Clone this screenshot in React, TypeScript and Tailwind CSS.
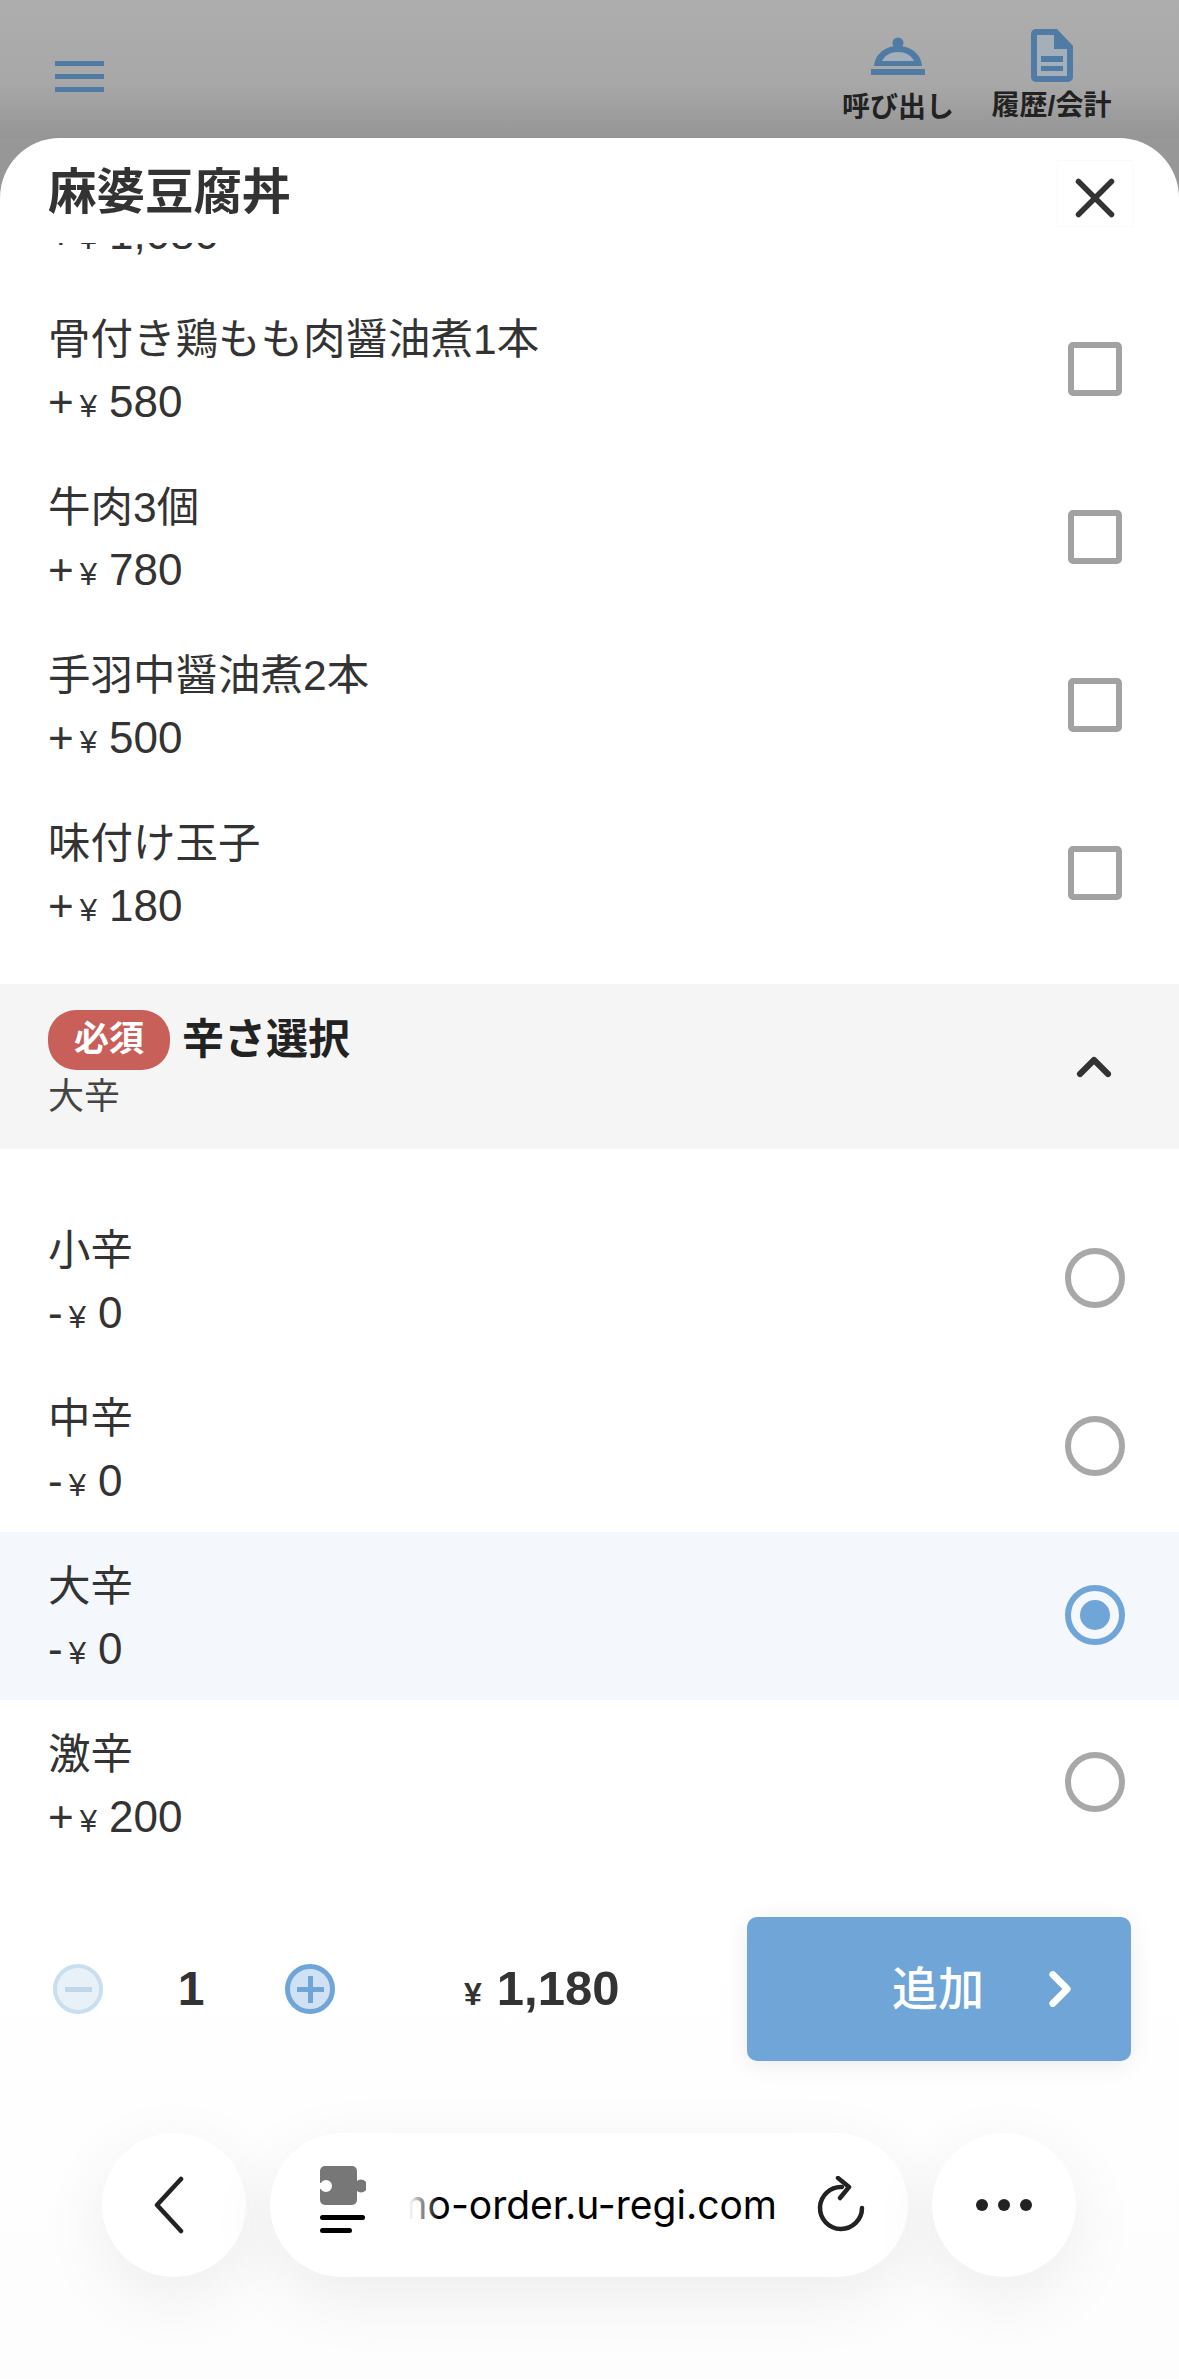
import { X, ChevronUp, ChevronRight } from "lucide-react";

interface Option {
  name: string;
  price: string;
  selected?: boolean;
}

const toppings: Option[] = [
  { name: "骨付き鶏もも肉醤油煮1本", price: "+¥ 580" },
  { name: "牛肉3個", price: "+¥ 780" },
  { name: "手羽中醤油煮2本", price: "+¥ 500" },
  { name: "味付け玉子", price: "+¥ 180" },
];

const spiciness: Option[] = [
  { name: "小辛", price: "-¥ 0" },
  { name: "中辛", price: "-¥ 0" },
  { name: "大辛", price: "-¥ 0", selected: true },
  { name: "激辛", price: "+¥ 200" },
];

function OptionText({ option }: { option: Option }) {
  const [sign, amount] = [option.price.slice(0, 2), option.price.slice(3)];
  return (
    <div className="mt-[9px] flex flex-col text-[#333] text-[42.5px] leading-[62px]">
      <span>{option.name}</span>
      <span className="text-[44px]">
        {sign[0]}
        <span className="ml-[6px] mr-[12px] text-[31px]">{sign[1]}</span>
        {amount}
      </span>
    </div>
  );
}

function CheckRow({ option }: { option: Option }) {
  return (
    <div className="h-[168px] pl-[48px] pr-[57px] flex items-center justify-between">
      <OptionText option={option} />
      <div className="w-[54px] h-[54px] border-[6px] border-[#a2a2a2] rounded-[5px]" />
    </div>
  );
}

function RadioRow({ option }: { option: Option }) {
  return (
    <div
      className={`h-[168px] pl-[48px] pr-[54px] flex items-center justify-between ${
        option.selected ? "bg-[#f4f7fb]" : ""
      }`}
    >
      <OptionText option={option} />
      {option.selected ? (
        <div className="-mt-[3px] w-[60px] h-[60px] rounded-full border-[6px] border-[#6fa5d7] flex items-center justify-center">
          <div className="w-[30px] h-[30px] rounded-full bg-[#6fa5d7]" />
        </div>
      ) : (
        <div className="-mt-[5px] w-[60px] h-[60px] rounded-full border-[6px] border-[#a8a8a8]" />
      )}
    </div>
  );
}

function BellIcon() {
  return (
    <svg width="54" height="38" viewBox="0 0 54 38">
      <circle cx="27" cy="6" r="5.5" fill="#4f7ba5" />
      <path d="M3 29C4 17 14 9 27 9s23 8 24 20z" fill="#4f7ba5" />
      <path d="M11 24c3-6 9-9 16-9s13 3 16 9z" fill="#a4afba" />
      <rect x="0" y="32" width="54" height="6" fill="#4f7ba5" />
    </svg>
  );
}

function DocIcon() {
  return (
    <svg width="42" height="53" viewBox="0 0 42 53">
      <path
        d="M5 0h21l16 17v31a5 5 0 0 1-5 5H5a5 5 0 0 1-5-5V5a5 5 0 0 1 5-5z"
        fill="#4f7ba5"
      />
      <path d="M6 6h17v14h13v27H6z" fill="#a4afba" />
      <rect x="10" y="27" width="22" height="6" fill="#4f7ba5" />
      <rect x="10" y="37" width="22" height="5" fill="#4f7ba5" />
    </svg>
  );
}

function PuzzleIcon() {
  return (
    <svg width="46" height="70" viewBox="0 0 46 70">
      <rect x="0" y="0" width="37" height="39" rx="5" fill="#777" />
      <circle cx="41" cy="20" r="6.5" fill="#777" />
      <circle cx="6" cy="20" r="6" fill="#fff" />
      <rect x="0" y="17" width="4" height="6" fill="#fff" />
      <rect x="0" y="49" width="45" height="5" rx="2.5" fill="#000" />
      <rect x="0" y="62" width="32" height="5" rx="2.5" fill="#000" />
    </svg>
  );
}

function ReloadIcon() {
  return (
    <svg width="50" height="58" viewBox="0 0 50 58" fill="none" stroke="#222" strokeWidth="4.5" strokeLinecap="round" strokeLinejoin="round">
      <path d="M46 32a21 21 0 1 1-20-21" />
      <path d="M22 2l11 9-9 11" />
    </svg>
  );
}

export default function App() {
  return (
    <div className="w-full h-[2379px] flex flex-col overflow-hidden bg-[#979797] [font-family:'Liberation_Sans','Noto_Sans_CJK_JP',sans-serif]">
      {/* top bar behind the sheet */}
      <header className="h-[138px] shrink-0 flex items-start justify-between bg-gradient-to-b from-[#adadad] via-[#a8a8a8] via-60% to-[#959595] pl-[55px] pr-[66px]">
        <div className="mt-[61px] w-[49px] flex flex-col gap-[8px]">
          <div className="h-[5px] bg-[#4f7ba5]" />
          <div className="h-[5px] bg-[#4f7ba5]" />
          <div className="h-[5px] bg-[#4f7ba5]" />
        </div>
        <div className="flex gap-[37px]">
          <div className="w-[110px] flex flex-col items-center">
            <div className="h-[29px] mt-[8px]" />
            <BellIcon />
            <span className="mt-[16px] text-[28px] leading-[34px] font-bold text-[#222] whitespace-nowrap">呼び出し</span>
          </div>
          <div className="w-[123px] flex flex-col items-center">
            <div className="mt-[29px]">
              <DocIcon />
            </div>
            <span className="mt-[7px] text-[28px] leading-[34px] font-bold text-[#222] whitespace-nowrap">履歴/会計</span>
          </div>
        </div>
      </header>

      <div className="flex-1 min-h-0 flex flex-col bg-white rounded-t-[60px]">
        <div className="h-[105px] shrink-0 flex items-start justify-between pl-[48px] pr-[46px]">
          <h1 className="mt-[24px] text-[48.5px] leading-[60px] font-bold text-[#333]">麻婆豆腐丼</h1>
          <div className="mt-[22px] w-[76px] h-[67px] border border-[#fafafa] flex items-center justify-center">
            <div className="mt-[8px]">
              <X size={66} strokeWidth={2} color="#333" />
            </div>
          </div>
        </div>

        <div className="flex-1 min-h-0 overflow-hidden">
          <div className="-mt-[126px]">
            <CheckRow option={{ name: "\u00a0", price: "+¥ 1,080" }} />
            {toppings.map((t) => (
              <CheckRow key={t.name} option={t} />
            ))}
            <div className="mt-[27px] h-[165px] bg-[#f5f5f5] pl-[48px] pr-[57px] pb-[6px] flex items-center justify-between">
              <div className="flex flex-col">
                <div className="flex items-center gap-[12px]">
                  <span className="w-[122px] h-[60px] rounded-[28px] bg-[#c85f59] text-white text-[35px] font-bold flex items-center justify-center">必須</span>
                  <span className="text-[42px] leading-[60px] font-bold text-[#222]">辛さ選択</span>
                </div>
                <span className="mt-[6px] text-[36px] leading-[42px] text-[#444]">大辛</span>
              </div>
              <div className="mt-[6px]">
                <ChevronUp size={56} strokeWidth={2.6} color="#333" />
              </div>
            </div>
            <div className="mt-[47px]">
              {spiciness.map((s) => (
                <RadioRow key={s.name} option={s} />
              ))}
            </div>
          </div>
        </div>

        <div className="h-[499px] shrink-0 flex flex-col pt-[37px] bg-gradient-to-b from-white to-[#fdfdfd]">
          <div className="flex items-center pl-[53px] pr-[48px]">
            <div className="w-[50px] h-[50px] rounded-full border-[4px] border-[#c9deef] bg-[#e9f1f8] flex items-center justify-center">
              <div className="w-[27px] h-[5px] bg-[#c0d6ea]" />
            </div>
            <span className="w-[182px] pr-[6px] text-center text-[48px] font-bold text-[#333]">1</span>
            <div className="relative w-[50px] h-[50px] rounded-full border-[5px] border-[#6fa5d7] bg-[#cfe1f2] flex items-center justify-center">
              <div className="w-[27px] h-[5px] bg-[#6fa5d7]" />
              <div className="absolute w-[5px] h-[27px] bg-[#6fa5d7]" />
            </div>
            <span className="ml-[129px] text-[49px] font-bold text-[#333] whitespace-nowrap">
              <span className="text-[32px] mr-[15px]">¥</span>1,180
            </span>
            <button className="ml-auto w-[384px] h-[144px] rounded-[10px] bg-[#6fa5d7] text-white shadow-[0_4px_24px_rgba(0,0,0,0.08)] flex items-center justify-end pr-[42px] gap-[47px]">
              <span className="text-[46px] font-medium">追加</span>
              <ChevronRight size={58} strokeWidth={2.8} color="#fff" />
            </button>
          </div>

          <div className="mt-[72px] flex justify-center gap-[24px] pr-[1px]">
            <div className="w-[144px] h-[144px] rounded-full bg-white shadow-[0_20px_70px_rgba(0,0,0,0.07)] flex items-center justify-center">
              <svg className="mr-[10px]" width="34" height="58" viewBox="0 0 34 58" fill="none" stroke="#222" strokeWidth="4.5" strokeLinecap="round" strokeLinejoin="round">
                <path d="M29 3L5 29l24 26" />
              </svg>
            </div>
            <div className="w-[638px] h-[144px] rounded-[72px] bg-white shadow-[0_20px_70px_rgba(0,0,0,0.07)] flex items-center pl-[50px] pr-[42px]">
              <div className="-mt-[8px]">
                <PuzzleIcon />
              </div>
              <div className="relative ml-[43px] w-[368px] overflow-hidden flex justify-end">
                <span className="text-[39px] leading-[50px] text-black whitespace-nowrap [font-family:Inter,sans-serif]">demo-order.u-regi.com</span>
                <div className="absolute left-0 top-0 h-full w-[30px] bg-gradient-to-r from-white to-transparent" />
              </div>
              <div className="ml-auto">
                <ReloadIcon />
              </div>
            </div>
            <div className="w-[144px] h-[144px] rounded-full bg-white shadow-[0_20px_70px_rgba(0,0,0,0.07)] flex items-center justify-center gap-[10px]">
              <div className="w-[12px] h-[12px] rounded-full bg-[#222]" />
              <div className="w-[12px] h-[12px] rounded-full bg-[#222]" />
              <div className="w-[12px] h-[12px] rounded-full bg-[#222]" />
            </div>
          </div>
        </div>
      </div>
    </div>
  );
}
